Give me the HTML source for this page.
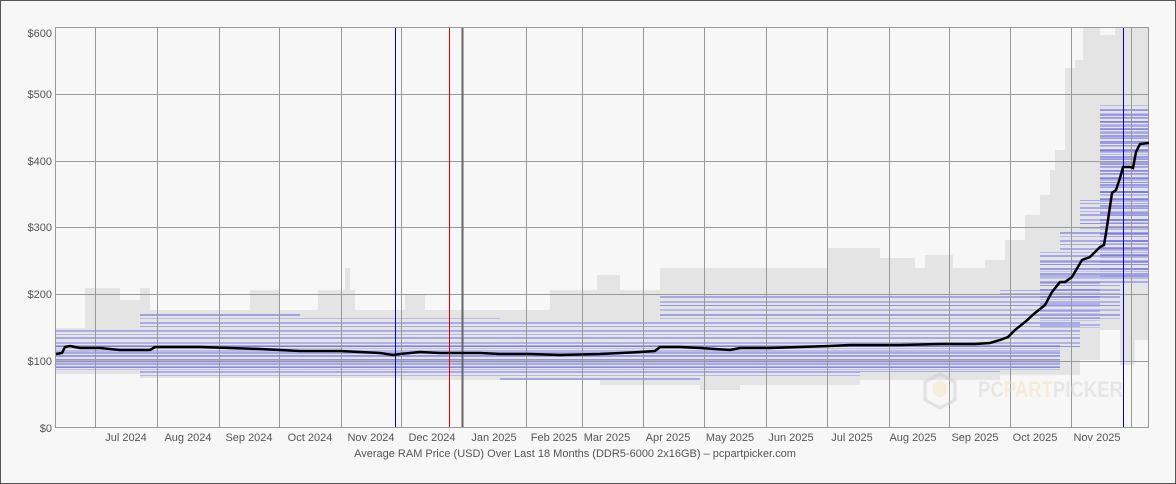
<!DOCTYPE html>
<html><head><meta charset="utf-8"><style>
html,body{margin:0;padding:0;background:#f7f7f7;}
svg{display:block;font-family:"Liberation Sans",sans-serif;}
</style></head><body>
<svg width="1176" height="484" viewBox="0 0 1176 484" xmlns="http://www.w3.org/2000/svg">
<defs>
<pattern id="bl" patternUnits="userSpaceOnUse" width="1100" height="41">
<rect x="0" y="2" width="1100" height="2" fill="#7b7be8" opacity=".55"/>
<rect x="0" y="6" width="1100" height="1" fill="#9a9aee" opacity=".6"/>
<rect x="0" y="9" width="1100" height="2" fill="#6a6ae6" opacity=".5"/>
<rect x="0" y="14" width="1100" height="2" fill="#8888ea" opacity=".55"/>
<rect x="0" y="18" width="1100" height="1" fill="#5c5ce4" opacity=".6"/>
<rect x="0" y="22" width="1100" height="2" fill="#9090ee" opacity=".5"/>
<rect x="0" y="27" width="1100" height="2" fill="#6767e6" opacity=".55"/>
<rect x="0" y="31" width="1100" height="1" fill="#a0a0f0" opacity=".6"/>
<rect x="0" y="35" width="1100" height="2" fill="#7070e8" opacity=".5"/>
<rect x="0" y="39" width="1100" height="1" fill="#8080ea" opacity=".6"/>
</pattern>
<pattern id="bl2" patternUnits="userSpaceOnUse" width="1100" height="7">
<rect x="0" y="2" width="1100" height="2" fill="#6060e0" opacity=".55"/>
<rect x="0" y="5" width="1100" height="1" fill="#8a8aea" opacity=".5"/>
</pattern>
</defs>
<rect x="0.5" y="0.5" width="1175" height="483" fill="#f7f7f7" stroke="#555"/>
<g fill="#e4e4e4">
<polygon points="56,328 85,328 85,288 120,288 120,300 140,300 140,288 150,288 150,310 250,310 250,290 280,290 280,310 318,310 318,290 345,290 345,268 350,268 350,290 355,290 355,310 405,310 405,295 425,295 425,310 550,310 550,290 597,290 597,275 620,275 620,290 660,290 660,268 828,268 828,248 880,248 880,258 915,258 915,268 925,268 925,255 953,255 953,268 985,268 985,260 1005,260 1005,240 1025,240 1025,215 1040,215 1040,195 1050,195 1050,170 1055,170 1055,150 1065,150 1065,68 1075,68 1075,60 1083,60 1083,27 1100,27 1100,35 1115,35 1115,27 1149,27 1149,340 1135,340 1135,365 1120,365 1120,330 1100,330 1100,360 1080,360 1080,375 1000,375 1000,380 860,380 860,385 740,385 740,390 700,390 700,385 600,385 600,380 400,380 400,378 140,378 140,374 56,374"/>
</g>
<polygon fill="url(#bl)" points="56,330 140,330 140,312 300,312 300,318 500,318 500,320 660,320 660,296 1000,296 1000,290 1040,290 1040,250 1060,250 1060,230 1080,230 1080,200 1100,200 1100,105 1149,105 1149,285 1120,285 1120,320 1080,320 1080,350 1060,350 1060,368 1000,368 1000,372 860,372 860,376 700,376 700,380 500,380 500,376 140,376 140,370 56,370"/>
<polygon fill="url(#bl2)" points="56,345 1060,345 1060,372 56,372" opacity=".8"/>
<polygon fill="url(#bl2)" points="1100,110 1149,110 1149,280 1100,280"/>
<polygon fill="url(#bl2)" points="1040,260 1100,260 1100,330 1040,330" opacity=".7"/>
<g stroke="#999" stroke-width="1">
<line x1="55" y1="94.5" x2="1149" y2="94.5"/>
<line x1="55" y1="161.5" x2="1149" y2="161.5"/>
<line x1="55" y1="227.5" x2="1149" y2="227.5"/>
<line x1="55" y1="294.5" x2="1149" y2="294.5"/>
<line x1="55" y1="361.5" x2="1149" y2="361.5"/>
<line x1="95.5" y1="27" x2="95.5" y2="428"/>
<line x1="157.5" y1="27" x2="157.5" y2="428"/>
<line x1="219.5" y1="27" x2="219.5" y2="428"/>
<line x1="279.5" y1="27" x2="279.5" y2="428"/>
<line x1="341.5" y1="27" x2="341.5" y2="428"/>
<line x1="401.5" y1="27" x2="401.5" y2="428"/>
<line x1="526.5" y1="27" x2="526.5" y2="428"/>
<line x1="582.5" y1="27" x2="582.5" y2="428"/>
<line x1="643.5" y1="27" x2="643.5" y2="428"/>
<line x1="704.5" y1="27" x2="704.5" y2="428"/>
<line x1="766.5" y1="27" x2="766.5" y2="428"/>
<line x1="827.5" y1="27" x2="827.5" y2="428"/>
<line x1="889.5" y1="27" x2="889.5" y2="428"/>
<line x1="949.5" y1="27" x2="949.5" y2="428"/>
<line x1="1010.5" y1="27" x2="1010.5" y2="428"/>
<line x1="1071.5" y1="27" x2="1071.5" y2="428"/>
<line x1="1131.5" y1="27" x2="1131.5" y2="428"/>
</g>
<line x1="462.5" y1="27" x2="462.5" y2="428" stroke="#666" stroke-width="2"/>
<line x1="395.5" y1="27" x2="395.5" y2="428" stroke="#0000dd"/>
<line x1="449.5" y1="27" x2="449.5" y2="428" stroke="#dd0000"/>
<line x1="1123.5" y1="27" x2="1123.5" y2="428" stroke="#0000dd"/>
<rect x="55.5" y="27.5" width="1093" height="400" fill="none" stroke="#999"/>
<g opacity=".5">
<path d="M925,382 L940,374 L955,382 L955,400 L940,408 L925,400 Z" fill="none" stroke="#ccc" stroke-width="3"/>
<path d="M933,384 L940,380 L947,384 L947,394 L940,398 L933,394 Z" fill="#f5e6bf"/>
<text x="978" y="397" font-size="22" font-weight="bold" fill="#d6d6d6" textLength="145" lengthAdjust="spacingAndGlyphs">PC<tspan fill="#f3e3b8">PART</tspan>PICKER</text>
</g>
<polyline fill="none" stroke="#000" stroke-width="2.5" points="56,354 62,353 65,347 70,346 80,348 100,348 120,350 150,350 155,347 200,347 230,348 260,349 280,350 300,351 340,351 360,352 380,353 393,355 400,354 410,353 420,352 440,353 480,353 500,354 530,354 560,355 600,354 640,352 655,351 660,347 680,347 700,348 730,350 740,348 770,348 800,347 830,346 850,345 900,345 940,344 975,344 990,343 1000,340 1008,337 1015,330 1025,322 1035,313 1045,305 1052,292 1060,282 1065,282 1072,277 1082,260 1090,257 1100,247 1104,245 1106,233 1108,220 1112,193 1116,190 1120,178 1123,167 1130,167 1133,168 1136,152 1140,144 1149,143"/>
<g font-size="11" fill="#555" text-anchor="end">
<text x="52" y="37">$600</text>
<text x="52" y="98">$500</text>
<text x="52" y="165">$400</text>
<text x="52" y="231">$300</text>
<text x="52" y="298">$200</text>
<text x="52" y="365">$100</text>
<text x="52" y="432">$0</text>
</g>
<g font-size="11" fill="#555" text-anchor="middle">
<text x="126" y="441">Jul 2024</text>
<text x="188" y="441">Aug 2024</text>
<text x="249" y="441">Sep 2024</text>
<text x="310" y="441">Oct 2024</text>
<text x="371" y="441">Nov 2024</text>
<text x="432" y="441">Dec 2024</text>
<text x="494" y="441">Jan 2025</text>
<text x="554" y="441">Feb 2025</text>
<text x="607" y="441">Mar 2025</text>
<text x="668" y="441">Apr 2025</text>
<text x="730" y="441">May 2025</text>
<text x="791" y="441">Jun 2025</text>
<text x="852" y="441">Jul 2025</text>
<text x="913" y="441">Aug 2025</text>
<text x="975" y="441">Sep 2025</text>
<text x="1035" y="441">Oct 2025</text>
<text x="1097" y="441">Nov 2025</text>
<text x="575" y="457">Average RAM Price (USD) Over Last 18 Months (DDR5-6000 2x16GB) – pcpartpicker.com</text>
</g>
</svg>
</body></html>
